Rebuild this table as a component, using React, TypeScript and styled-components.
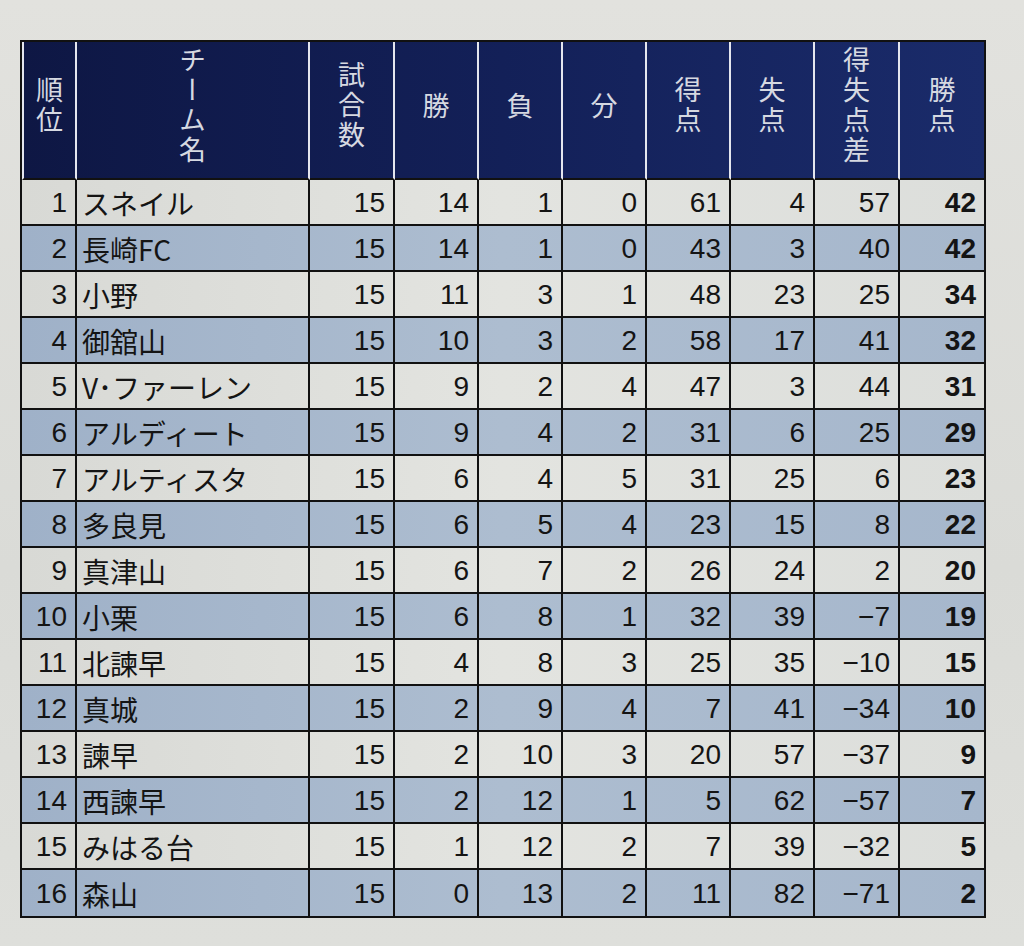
import React from "react";
import styled, { createGlobalStyle } from "styled-components";

const GlobalStyle = createGlobalStyle`
  html, body {
    margin: 0;
    padding: 0;
    background: #dcddd9;
  }
  body {
    font-family: "Liberation Sans", "Noto Sans CJK JP", sans-serif;
  }
`;

const Page = styled.div`
  width: 1024px;
  height: 946px;
  padding: 40px 0 0 20px;
  box-sizing: border-box;
  background: linear-gradient(180deg, #e2e2de 0%, #dadbd7 60%, #dedfdb 100%);
`;

const Table = styled.table`
  table-layout: fixed;
  width: 964px;
  border-collapse: separate;
  border-spacing: 0;
  border: 2px solid #111;
  color: #111;
`;

const HeadRow = styled.tr`
  height: 138px;
  background: linear-gradient(90deg, #0e1744 0%, #132058 50%, #1a2b6a 100%);
`;

const HeadCell = styled.th<{ $first?: boolean; $last?: boolean }>`
  padding: 0;
  vertical-align: middle;
  text-align: center;
  font-family: "Noto Sans CJK JP", sans-serif;
  font-weight: 400;
  font-size: 27px;
  color: #d6d9e1;
  border-bottom: 2px solid #111;
  border-right: ${(p) => (p.$last ? "none" : "2px solid #e4e6ee")};
  border-left: ${(p) => (p.$first ? "2px solid #e4e6ee" : "none")};
`;

const Vertical = styled.span`
  display: inline-block;
  writing-mode: vertical-rl;
  text-orientation: upright;
  letter-spacing: 3px;
  line-height: 1;
`;

const BodyRow = styled.tr<{ $alt: boolean }>`
  height: 46px;
  background: ${(p) =>
    p.$alt
      ? "linear-gradient(90deg, #9fb1c8 0%, #adbdd0 50%, #a6b7cc 100%)"
      : "linear-gradient(90deg, #d8d9d5 0%, #e3e4e0 50%, #dcdedb 100%)"};
`;

const Cell = styled.td<{
  $align?: "left" | "right";
  $bold?: boolean;
  $lastCol?: boolean;
  $lastRow?: boolean;
  $name?: boolean;
}>`
  padding: 2px ${(p) => (p.$align === "left" ? "0" : "8px")} 0
    ${(p) => (p.$align === "left" ? "5px" : "0")};
  text-align: ${(p) => p.$align ?? "right"};
  vertical-align: middle;
  font-family: ${(p) =>
    p.$name
      ? '"Noto Sans CJK JP", sans-serif'
      : '"Liberation Sans", "Noto Sans CJK JP", sans-serif'};
  font-size: ${(p) => (p.$name ? "28px" : "28px")};
  font-weight: ${(p) => (p.$bold ? 700 : 400)};
  line-height: 1;
  white-space: nowrap;
  overflow: hidden;
  color: #141414;
  border-right: ${(p) => (p.$lastCol ? "none" : "2px solid #111")};
  border-bottom: ${(p) => (p.$lastRow ? "none" : "2px solid #111")};
`;

const headers: { label: string; width: number }[] = [
  { label: "順位", width: 55 },
  { label: "チーム名", width: 233 },
  { label: "試合数", width: 85 },
  { label: "勝", width: 84 },
  { label: "負", width: 84 },
  { label: "分", width: 84 },
  { label: "得点", width: 84 },
  { label: "失点", width: 84 },
  { label: "得失点差", width: 85 },
  { label: "勝点", width: 84 },
];

type Team = [number, string, number, number, number, number, number, number, number, number];

const rows: Team[] = [
  [1, "スネイル", 15, 14, 1, 0, 61, 4, 57, 42],
  [2, "長崎FC", 15, 14, 1, 0, 43, 3, 40, 42],
  [3, "小野", 15, 11, 3, 1, 48, 23, 25, 34],
  [4, "御舘山", 15, 10, 3, 2, 58, 17, 41, 32],
  [5, "V･ファーレン", 15, 9, 2, 4, 47, 3, 44, 31],
  [6, "アルディート", 15, 9, 4, 2, 31, 6, 25, 29],
  [7, "アルティスタ", 15, 6, 4, 5, 31, 25, 6, 23],
  [8, "多良見", 15, 6, 5, 4, 23, 15, 8, 22],
  [9, "真津山", 15, 6, 7, 2, 26, 24, 2, 20],
  [10, "小栗", 15, 6, 8, 1, 32, 39, -7, 19],
  [11, "北諫早", 15, 4, 8, 3, 25, 35, -10, 15],
  [12, "真城", 15, 2, 9, 4, 7, 41, -34, 10],
  [13, "諫早", 15, 2, 10, 3, 20, 57, -37, 9],
  [14, "西諫早", 15, 2, 12, 1, 5, 62, -57, 7],
  [15, "みはる台", 15, 1, 12, 2, 7, 39, -32, 5],
  [16, "森山", 15, 0, 13, 2, 11, 82, -71, 2],
];

const fmt = (n: number) => (n < 0 ? `\u2212${Math.abs(n)}` : String(n));

export default function App() {
  return (
    <>
      <GlobalStyle />
      <Page>
        <Table>
          <colgroup>
            {headers.map((h) => (
              <col key={h.label} style={{ width: h.width }} />
            ))}
          </colgroup>
          <thead>
            <HeadRow>
              {headers.map((h, i) => (
                <HeadCell key={h.label} $first={i === 0} $last={i === headers.length - 1}>
                  <Vertical>{h.label}</Vertical>
                </HeadCell>
              ))}
            </HeadRow>
          </thead>
          <tbody>
            {rows.map((r, ri) => {
              const lastRow = ri === rows.length - 1;
              return (
                <BodyRow key={r[0]} $alt={ri % 2 === 1}>
                  <Cell $lastRow={lastRow}>{r[0]}</Cell>
                  <Cell $align="left" $name $lastRow={lastRow}>
                    {r[1]}
                  </Cell>
                  {r.slice(2).map((v, ci, arr) => (
                    <Cell
                      key={ci}
                      $lastRow={lastRow}
                      $lastCol={ci === arr.length - 1}
                      $bold={ci === arr.length - 1}
                    >
                      {fmt(v as number)}
                    </Cell>
                  ))}
                </BodyRow>
              );
            })}
          </tbody>
        </Table>
      </Page>
    </>
  );
}
